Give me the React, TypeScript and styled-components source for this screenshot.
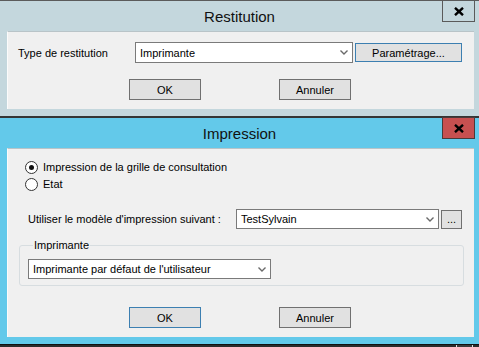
import React from "react";
import styled, { createGlobalStyle } from "styled-components";

const Global = createGlobalStyle`
  html, body { margin: 0; padding: 0; }
  body {
    width: 479px;
    height: 347px;
    overflow: hidden;
    background: #2b2b2b;
    font-family: "Liberation Sans", Arial, sans-serif;
    font-size: 11px;
    color: #000;
  }
  * { box-sizing: border-box; }
`;

const Screen = styled.div`
  display: flex;
  flex-direction: column;
  width: 479px;
  height: 347px;
`;

const Window = styled.div<{ $frame: string; $edge: string; $edgeWidth: number }>`
  display: flex;
  flex-direction: column;
  flex: none;
  background: ${(p) => p.$frame};
  border-top: ${(p) => p.$edgeWidth}px solid ${(p) => p.$edge};
  padding: 0 5px 7px 7px;
`;

const TitleBar = styled.div`
  display: grid;
  grid-template-columns: 1fr auto 1fr;
  height: 30px;
  margin: 0 -5px 0 -7px;
`;

const TitleText = styled.div`
  grid-column: 2;
  align-self: center;
  font-size: 15px;
  color: #111;
  padding-top: 1px;
`;

const CloseButton = styled.div<{ $danger?: boolean }>`
  grid-column: 3;
  justify-self: end;
  align-self: start;
  margin-top: -1px;
  margin-right: 4px;
  width: 33px;
  height: 22px;
  border: 1px solid ${(p) => (p.$danger ? "#4a3a3a" : "#5a5a5a")};
  background: ${(p) => (p.$danger ? "#c75050" : "transparent")};
  display: flex;
  align-items: center;
  justify-content: center;
`;

const Client = styled.div<{ $pad: string; $height: number }>`
  height: ${(p) => p.$height}px;
  background: #f0f0f0;
  border-top: 1px solid #b9c4c8;
  border-left: 1px solid #fbfbfb;
  padding: ${(p) => p.$pad};
  display: flex;
  flex-direction: column;
`;

const FormRow = styled.div<{ $top?: number; $indent?: number }>`
  display: flex;
  align-items: center;
  margin-top: ${(p) => p.$top ?? 0}px;
  padding-left: ${(p) => p.$indent ?? 0}px;
`;

const Label = styled.div<{ $width?: number }>`
  width: ${(p) => (p.$width ? `${p.$width}px` : "auto")};
  flex: none;
  white-space: nowrap;
`;

const Combo = styled.div<{ $width: number; $height?: number }>`
  width: ${(p) => p.$width}px;
  height: ${(p) => p.$height ?? 20}px;
  flex: none;
  background: #fff;
  border: 1px solid #7a7a7a;
  display: flex;
  align-items: center;
  justify-content: space-between;
  padding: 0 4px 0 4px;
`;

const Chevron = () => (
  <svg width="8" height="5" viewBox="0 0 8 5" style={{ display: "block" }}>
    <polyline points="0.5,0.5 4,4 7.5,0.5" fill="none" stroke="#6a6a6a" strokeWidth="1.4" />
  </svg>
);

const Button = styled.div<{ $width: number; $height?: number; $default?: boolean; $gap?: number }>`
  width: ${(p) => p.$width}px;
  height: ${(p) => p.$height ?? 21}px;
  margin-left: ${(p) => p.$gap ?? 0}px;
  flex: none;
  background: #e1e1e1;
  border: 1px solid ${(p) => (p.$default ? "#3c7fb1" : "#707070")};
  display: flex;
  align-items: center;
  justify-content: center;
  white-space: nowrap;
`;

const ButtonRow = styled.div<{ $top: number }>`
  display: flex;
  gap: 78px;
  padding-left: 121px;
  margin-top: ${(p) => p.$top}px;
`;

const RadioRow = styled.div<{ $top?: number }>`
  display: flex;
  align-items: center;
  gap: 5px;
  height: 14px;
  padding-left: 17px;
  margin-top: ${(p) => p.$top ?? 0}px;
`;

const RadioCircle = styled.div<{ $checked?: boolean }>`
  width: 13px;
  height: 13px;
  border-radius: 50%;
  border: 1px solid #333;
  background: #fff;
  display: flex;
  align-items: center;
  justify-content: center;
  &::after {
    content: "";
    display: ${(p) => (p.$checked ? "block" : "none")};
    width: 5px;
    height: 5px;
    border-radius: 50%;
    background: #111;
  }
`;

const GroupBox = styled.fieldset`
  margin: 10px 0 0 11px;
  width: 445px;
  border: 1px solid #d7dde0;
  border-radius: 3px;
  padding: 7px 0 6px 8px;
  min-inline-size: 0;
`;

const GroupLegend = styled.legend`
  padding: 0 1px;
  margin-left: 5px;
  line-height: 13px;
`;

const CloseGlyph = () => (
  <svg width="10" height="9" viewBox="0 0 10 9" style={{ display: "block" }}>
    <path d="M1 0.8 L9 8.2 M9 0.8 L1 8.2" stroke="#000" strokeWidth="2.4" />
  </svg>
);

const BottomStrip = styled.div`
  flex: 1;
  background: #2b2b2b;
  border-top: 1px solid #111;
  display: flex;
  justify-content: flex-end;
  padding-right: 6px;
`;

const BehindEdge = styled.div`
  width: 17px;
  border-left: 1px solid #e0e0e0;
  border-right: 1px solid #e0e0e0;
  background: #3a3a3a;
`;

export default function App() {
  return (
    <>
      <Global />
      <Screen>
        <Window $frame="#c4d7dd" $edge="#5b5b5b" $edgeWidth={1}>
          <TitleBar>
            <TitleText>Restitution</TitleText>
            <CloseButton>
              <CloseGlyph />
            </CloseButton>
          </TitleBar>
          <Client $pad="10px 0 0 0" $height={78}>
            <FormRow $indent={10}>
              <Label $width={117}>Type de restitution</Label>
              <Combo $width={218} $height={21}>
                <span>Imprimante</span>
                <Chevron />
              </Combo>
              <Button $width={107} $height={19} $default $gap={2}>
                Paramétrage...
              </Button>
            </FormRow>
            <ButtonRow $top={16}>
              <Button $width={72}>OK</Button>
              <Button $width={72}>Annuler</Button>
            </ButtonRow>
          </Client>
        </Window>
        <Window $frame="#63c9ea" $edge="#353535" $edgeWidth={2}>
          <TitleBar>
            <TitleText>Impression</TitleText>
            <CloseButton $danger>
              <CloseGlyph />
            </CloseButton>
          </TitleBar>
          <Client $pad="11px 0 0 0" $height={189}>
            <RadioRow>
              <RadioCircle $checked />
              <span>Impression de la grille de consultation</span>
            </RadioRow>
            <RadioRow $top={3}>
              <RadioCircle />
              <span>Etat</span>
            </RadioRow>
            <FormRow $top={18} $indent={20}>
              <Label $width={208}>Utiliser le modèle d'impression suivant :</Label>
              <Combo $width={203} $height={20}>
                <span>TestSylvain</span>
                <Chevron />
              </Combo>
              <Button $width={21} $height={19} $gap={2}>
                ...
              </Button>
            </FormRow>
            <GroupBox>
              <GroupLegend>Imprimante</GroupLegend>
              <Combo $width={243} $height={20}>
                <span>Imprimante par défaut de l'utilisateur</span>
                <Chevron />
              </Combo>
            </GroupBox>
            <ButtonRow $top={21}>
              <Button $width={72} $default>OK</Button>
              <Button $width={72}>Annuler</Button>
            </ButtonRow>
          </Client>
        </Window>
        <BottomStrip>
          <BehindEdge />
        </BottomStrip>
      </Screen>
    </>
  );
}
